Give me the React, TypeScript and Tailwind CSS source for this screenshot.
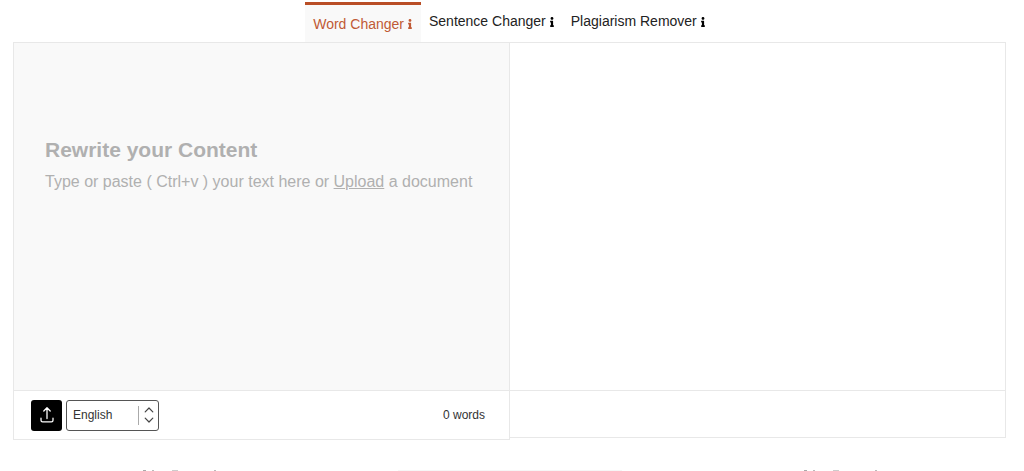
import React, { useState } from 'react';
import { FaInfo } from 'react-icons/fa';

const TABS = ['Word Changer', 'Sentence Changer', 'Plagiarism Remover'];

function UploadIcon() {
  return (
    <svg width="16" height="18" viewBox="0 0 16 18" fill="none" stroke="currentColor" strokeWidth="1.3" strokeLinecap="round" strokeLinejoin="round" aria-hidden="true">
      <path d="M8 12.5V2M4.8 5L8 1.8L11.2 5M2 12.2V14.2Q2 15.8 3.6 15.8H12.4Q14 15.8 14 14.2V12.2" />
    </svg>
  );
}

function SortArrows() {
  return (
    <svg width="10" height="18" viewBox="0 0 10 18" fill="none" stroke="#444" strokeWidth="1.2" strokeLinecap="round" strokeLinejoin="round" aria-hidden="true">
      <path d="M1.2 5.8L5 2L8.8 5.8M1.2 12.2L5 16L8.8 12.2" />
    </svg>
  );
}

// top edge of the section that follows the editor
function NextSection() {
  return (
    <div className="mt-[30px] flex h-px items-stretch justify-between pl-[139px] pr-[144px]" aria-hidden="true">
      <SectionEdge />
      <div className="w-[224px] bg-[#f6f6f6]" />
      <SectionEdge />
    </div>
  );
}

function SectionEdge() {
  return (
    <div className="flex w-[80px]">
      <span className="ml-1 w-[3px] bg-[#aaa]" />
      <span className="ml-[6px] w-[2px] bg-[#bbb]" />
      <span className="ml-[18px] w-[6px] bg-[#ccc]" />
      <span className="ml-9 w-[2px] bg-[#bbb]" />
    </div>
  );
}

export default function App() {
  const [active, setActive] = useState(0);
  const [text, setText] = useState('');
  const words = text.trim() ? text.trim().split(/\s+/).length : 0;

  return (
    <main className="bg-white font-['Liberation_Sans',Arial,sans-serif] text-black">
      {/* Tabs */}
      <div role="tablist" className="flex items-start justify-center pt-[2px] pr-[5px]">
        {TABS.map((tab, i) => (
          <button
            key={tab}
            role="tab"
            aria-selected={i === active}
            onClick={() => setActive(i)}
            className={`flex h-10 items-center gap-[3px] px-2 text-sm whitespace-nowrap ${
              i === active ? 'border-t-[3px] border-[#b94e26] bg-[#f9f9f9] text-[#c05a35]' : 'pb-[2px] text-[#222]'
            }`}
          >
            {tab}
            <FaInfo size={10} className={`mt-px w-[6px] ${i === active ? '' : 'text-black'}`} />
          </button>
        ))}
      </div>

      {/* Editor */}
      <div className="flex items-start pl-[13px] pr-[18px]">
        <section className="flex-1 border border-[#e8e8e8]">
          <div className="relative h-[347px] bg-[#f9f9f9]">
            <textarea
              aria-label="Text to rewrite"
              value={text}
              onChange={(e) => setText(e.target.value)}
              className="block h-full w-full resize-none bg-transparent p-8 text-base text-[#333] outline-none"
            />
            {!text && (
              <div className="pointer-events-none absolute inset-x-[31px] top-[93px] text-[#b0b0b0]">
                <h2 className="text-[21px] leading-7 font-bold">Rewrite your Content</h2>
                <p className="mt-[6px] text-base leading-6">
                  Type or paste ( Ctrl+v ) your text here or{' '}
                  <a href="#upload" className="pointer-events-auto underline">Upload</a> a document
                </p>
              </div>
            )}
          </div>
          <div className="flex h-[49px] items-center border-t border-[#e8e8e8] pl-[17px] pr-6 text-xs text-[#333]">
            <button id="upload" aria-label="Upload a document" className="flex size-[31px] items-center justify-center rounded-[3px] bg-black text-white">
              <UploadIcon />
            </button>
            <div className="relative ml-1">
              <select aria-label="Language" className="block h-[31px] w-[93px] appearance-none rounded-[3px] border border-[#555] bg-white pl-[6px] text-xs">
                <option>English</option>
              </select>
              <span className="pointer-events-none absolute inset-y-[6px] right-[5px] flex items-center border-l border-[#aaa] pl-[5px]">
                <SortArrows />
              </span>
            </div>
            <span className="ml-auto">{words} words</span>
          </div>
        </section>

        <section className="flex-1 border border-l-0 border-[#e8e8e8]">
          <div className="h-[347px]" />
          <div className="h-[47px] border-t border-[#e8e8e8]" />
        </section>
      </div>

      <NextSection />
    </main>
  );
}
